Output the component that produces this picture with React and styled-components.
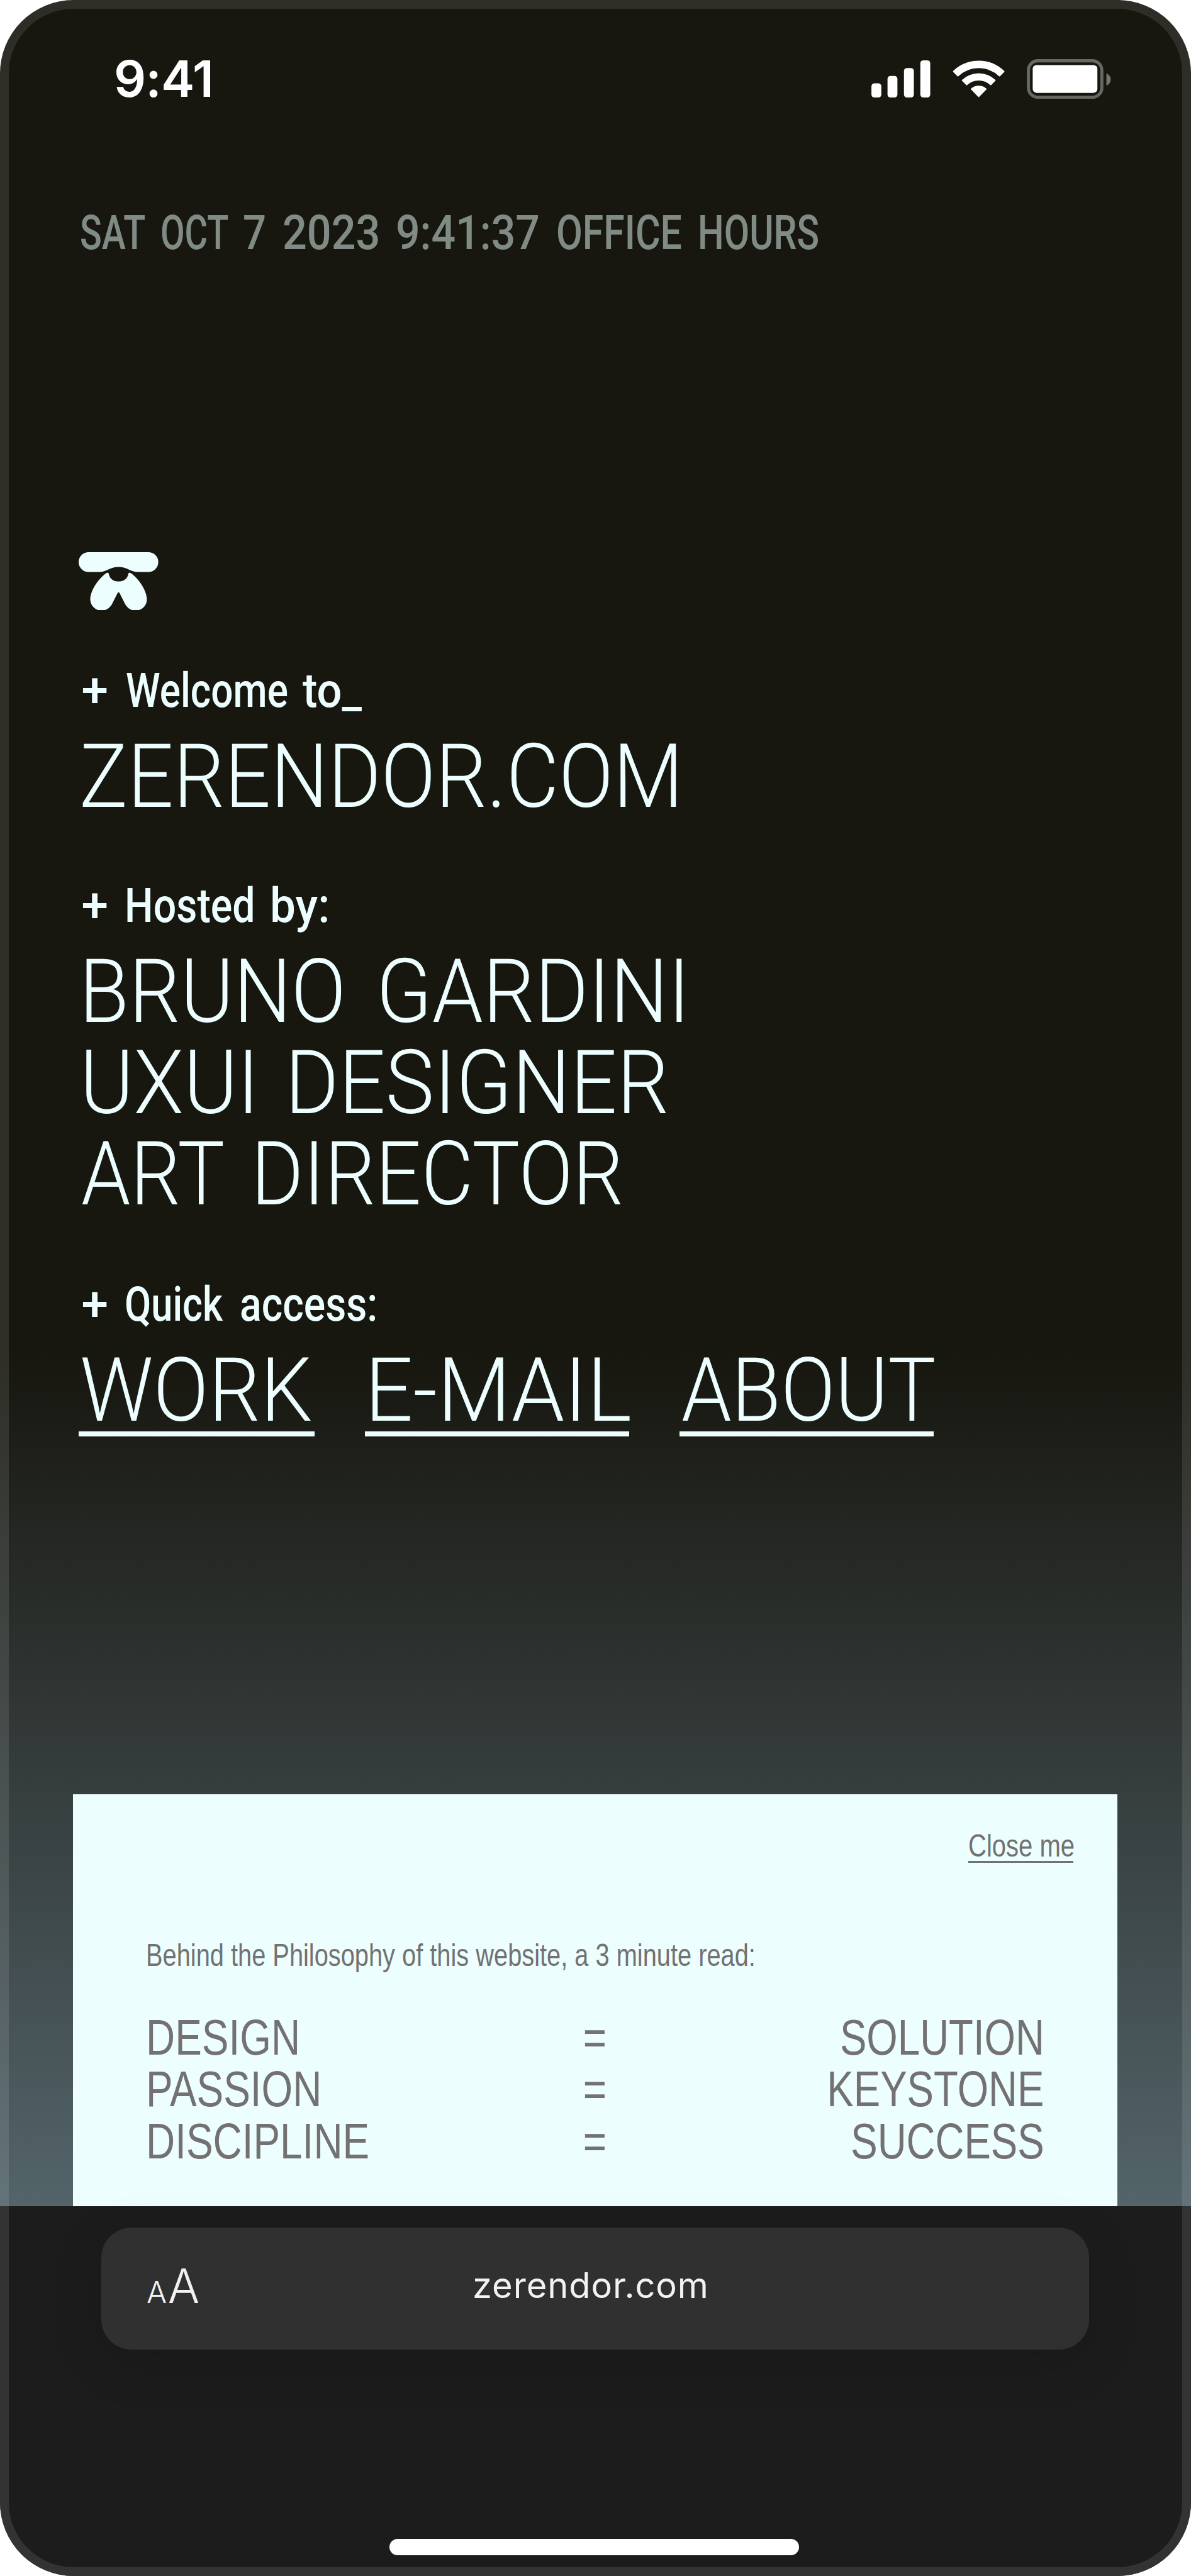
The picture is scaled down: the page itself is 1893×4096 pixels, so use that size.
import React from "react";
import styled, { createGlobalStyle } from "styled-components";

const mint = "#ecfffe";

const GlobalStyle = createGlobalStyle`
  * { box-sizing: border-box; }
  body { margin: 0; background: #ffffff; }
`;

const Phone = styled.div`
  position: relative;
  width: 1893px;
  height: 4096px;
  display: flex;
  flex-direction: column;
  overflow: hidden;
  border-radius: 117px;
  background: linear-gradient(180deg, #17160f 0px, #17160f 2147px, #53646a 3508px);
  color: ${mint};
  font-family: Roboto, "Liberation Sans", sans-serif;

  &::after {
    content: "";
    position: absolute;
    inset: 0;
    border: 14.6px solid rgba(255, 255, 255, 0.1);
    border-radius: 117px;
    pointer-events: none;
  }
`;

const StatusBar = styled.header`
  flex: none;
  height: 250.5px;
  padding: 0 127.2px 0 181px;
  display: flex;
  align-items: center;
  justify-content: space-between;
`;

const Clock = styled.time`
  color: #ffffff;
  font: 600 80px/96px Inter, sans-serif;
  letter-spacing: -0.8px;
`;

const StatusIcons = styled.div`
  display: flex;
  align-items: center;
  gap: 35.3px;

  svg { display: block; }
`;

const Content = styled.main`
  flex: 1 1 auto;
  min-height: 0;
  display: flex;
  flex-direction: column;
  align-items: flex-start;
  padding: 74.7px 116.7px 0 116.4px;
`;

const Line = styled.div`
  display: flex;
  padding-left: ${(p) => p.$indent ?? 15}px;
  white-space: nowrap;
`;

const DateLine = styled(Line)`
  color: rgba(236, 255, 254, 0.5);
  font-size: 76.5px;
  font-weight: 500;
  line-height: 90px;
`;

const Label = styled(Line)`
  margin-bottom: 20.5px;
  font-size: 76.5px;
  font-weight: 500;
  line-height: 90px;
`;

const Headline = styled(Line)`
  font-size: 141px;
  font-weight: 300;
  line-height: 144.8px;
`;

const Word = styled.span`
  flex: 0 0 ${(p) => p.$slot}px;
  width: ${(p) => p.$slot}px;
  transform-origin: 0 50%;
  transform: scaleX(${(p) => p.$k});
`;

const Logo = styled.svg`
  display: block;
  flex: none;
  width: 126.6px;
  height: 92.8px;
  margin: 462.4px 0 0 9px;
`;

const Section = styled.section`
  margin-top: ${(p) => p.$gap}px;
`;

const Links = styled.nav`
  display: flex;
  gap: 79.8px;
  padding-left: 9px;
`;

const NavLink = styled.a`
  display: flex;
  width: ${(p) => p.$w}px;
  height: 144.2px;
  padding-left: ${(p) => p.$pad}px;
  border-bottom: 8.2px solid ${mint};
  font-size: 141px;
  font-weight: 300;
  line-height: 144.8px;
  white-space: nowrap;
`;

const Card = styled.aside`
  flex: none;
  align-self: stretch;
  height: 655.7px;
  margin-top: auto;
  padding: 57px 116.7px 0 115.6px;
  display: flex;
  flex-direction: column;
  background: ${mint};
  color: #737171;
  font-family: "Liberation Sans", Arial, sans-serif;
`;

const CloseLink = styled.a`
  align-self: flex-end;
  width: 167px;
  height: 52px;
  margin-right: -46.4px;
  border-bottom: 3.6px solid #737171;
  font-size: 50.5px;
  line-height: 49px;
  white-space: nowrap;
`;

const Narrow = styled.span`
  display: inline-block;
  transform: scaleX(${(p) => p.$k ?? 0.793});
  transform-origin: ${(p) => p.$from ?? "left"} center;
`;

const Intro = styled.p`
  margin: 122.3px 0 65px;
  font-size: 50.5px;
  line-height: 49px;
  white-space: nowrap;
`;

const Equations = styled.div`
  display: grid;
  grid-template-columns: 1fr auto 1fr;
  font-size: 80.6px;
  line-height: 82.5px;
`;

const Result = styled.div`
  text-align: right;
`;

const BrowserBar = styled.footer`
  flex: none;
  height: 587.7px;
  padding: 33.5px 161.8px 33.4px 160.6px;
  display: flex;
  flex-direction: column;
  align-items: center;
  justify-content: space-between;
  background: #1c1c1c;
  color: #f2f2f2;
  font-family: Inter, sans-serif;
`;

const AddressBar = styled.div`
  align-self: stretch;
  height: 194.2px;
  padding: 0 0 8px 72.5px;
  display: flex;
  align-items: center;
  border-radius: 48px;
  background: #303030;
  box-shadow: 0 20px 84px rgba(0, 0, 0, 0.13);
`;

const TextSize = styled.div`
  flex: 0 0 518px;
  display: flex;
  align-items: baseline;
  gap: 1.5px;
  padding-top: 10px;
  font-weight: 350;
  line-height: 100px;
`;

const Letter = styled.span`
  font-size: ${(p) => p.$size}px;
`;

const Domain = styled.div`
  padding-bottom: 2px;
  font-size: 56px;
  line-height: 72px;
  letter-spacing: 0.9px;
`;

const HomeIndicator = styled.div`
  width: 650.7px;
  height: 25.4px;
  margin-right: 2.4px;
  border-radius: 13px;
  background: #ffffff;
`;

const SignalIcon = () => (
  <svg width="93.8" height="59" viewBox="0 0 100 63" fill="#fff">
    <rect x="0" y="39" width="16.8" height="24" rx="5" />
    <rect x="27.3" y="26.3" width="16.8" height="36.7" rx="5" />
    <rect x="55.2" y="13" width="16.8" height="50" rx="5" />
    <rect x="83" y="0" width="16.8" height="63" rx="5" />
  </svg>
);

const WifiIcon = () => (
  <svg width="83.2" height="59" viewBox="0 0 88.7 63" fill="#fff" stroke="#fff" strokeWidth="2.4" strokeLinejoin="round">
    <path d="M1.9 18.8 A61 61 0 0 1 86.8 18.8 L79.6 26 A51 51 0 0 0 9.1 26 Z" />
    <path d="M16.9 33.9 A40 40 0 0 1 71.8 33.9 L64.7 41 A30 30 0 0 0 24 41 Z" />
    <path d="M32.2 48.6 A19.2 19.2 0 0 1 56.5 48.6 L44.35 61.2 Z" />
  </svg>
);

const BatteryIcon = () => (
  <svg width="133.5" height="63.3" viewBox="0 0 142.4 67.5" fill="none">
    <rect x="2.8" y="2.8" width="124.4" height="61.9" rx="16" stroke="#686862" strokeWidth="5.4" />
    <rect x="10" y="10" width="109.7" height="47.2" rx="6.5" fill="#fff" />
    <path d="M135 24.3 C139.5 26.3 142.3 30 142.3 34.7 C142.3 39.3 139.5 43 135 45 Z" fill="#767670" />
  </svg>
);

const date = [
  ["SAT", 128, 0.75],
  ["OCT", 131.1, 0.732],
  ["7", 63.5, 0.854],
  ["2023", 179.9, 0.894],
  ["9:41:37", 254.3, 0.888],
  ["OFFICE", 225.1, 0.794],
  ["HOURS", 190, 0.768],
];

const Words = ({ items }) =>
  items.map(([text, slot, k]) => (
    <Word key={text} $slot={slot} $k={k}>{text}</Word>
  ));

const equations = [
  ["DESIGN", "SOLUTION"],
  ["PASSION", "KEYSTONE"],
  ["DISCIPLINE", "SUCCESS"],
];

export default function App() {
  return (
    <>
      <GlobalStyle />
      <Phone>
        <StatusBar>
          <Clock>9:41</Clock>
          <StatusIcons>
            <SignalIcon />
            <WifiIcon />
            <BatteryIcon />
          </StatusIcons>
        </StatusBar>
        <Content>
          <DateLine $indent={10.5}><Words items={date} /></DateLine>
          <Logo viewBox="0 0 405 297" fill={mint}>
            <path d="M50.5 0H354.5a50.5 50.5 0 0 1 0 101H303C262 101 248 75 203 75C158 75 144 101 103 101H50.5a50.5 50.5 0 0 1 0-101Z" />
            <path d="M148 105C154 105 153 112 156 120C162 138 180 149 203 149C226 149 244 138 250 120C253 112 252 105 258 105C264 105 266 107 270 110C312 143 347 200 347 240A57 57 0 0 1 289 297C268 297 252 288 238 267L208 208Q203 200 198 208L168 267C154 288 138 297 116 297A57 57 0 0 1 59 240C59 200 94 143 136 110C140 107 142 105 148 105Z" />
          </Logo>
          <Section $gap={82.6}>
            <Label $indent={13}><Words items={[["+", 70.5, 1], ["Welcome", 281.5, 0.812], ["to_", 95, 0.92]]} /></Label>
            <Headline $indent={10}><Words items={[["ZERENDOR.COM", 945, 0.91]]} /></Headline>
          </Section>
          <Section $gap={86.3}>
            <Label $indent={13}><Words items={[["+", 68.6, 1], ["Hosted", 230.7, 0.842], ["by:", 95, 0.951]]} /></Label>
            <Headline $indent={9.7}><Words items={[["BRUNO", 472, 0.913], ["GARDINI", 475, 0.92]]} /></Headline>
            <Headline $indent={10.5}><Words items={[["UXUI", 326.5, 0.921], ["DESIGNER", 600, 0.925]]} /></Headline>
            <Headline $indent={12.8}><Words items={[["ART", 270, 0.89], ["DIRECTOR", 580, 0.902]]} /></Headline>
          </Section>
          <Section $gap={89.4}>
            <Label $indent={13}><Words items={[["+", 69, 1], ["Quick", 182.6, 0.802], ["access:", 214, 0.84]]} /></Label>
            <Links>
              <NavLink $w={375} $pad={1.5}><Word $slot={370} $k={0.922}>WORK</Word></NavLink>
              <NavLink $w={420.1} $pad={0}><Word $slot={420} $k={0.955}>E-MAIL</Word></NavLink>
              <NavLink $w={404.1} $pad={3}><Word $slot={400} $k={0.905}>ABOUT</Word></NavLink>
            </Links>
          </Section>
          <Card>
            <CloseLink><Narrow>Close me</Narrow></CloseLink>
            <Intro><Narrow $k={0.788}>Behind the Philosophy of this website, a 3 minute read:</Narrow></Intro>
            <Equations>
              {equations.map(([left, right]) => (
                <React.Fragment key={left}>
                  <div><Narrow>{left}</Narrow></div>
                  <Narrow $from="center">=</Narrow>
                  <Result><Narrow $from="right" $k={0.789}>{right}</Narrow></Result>
                </React.Fragment>
              ))}
            </Equations>
          </Card>
        </Content>
        <BrowserBar>
          <AddressBar>
            <TextSize>
              <Letter $size={47.7}>A</Letter>
              <Letter $size={75}>A</Letter>
            </TextSize>
            <Domain>zerendor.com</Domain>
          </AddressBar>
          <HomeIndicator />
        </BrowserBar>
      </Phone>
    </>
  );
}
